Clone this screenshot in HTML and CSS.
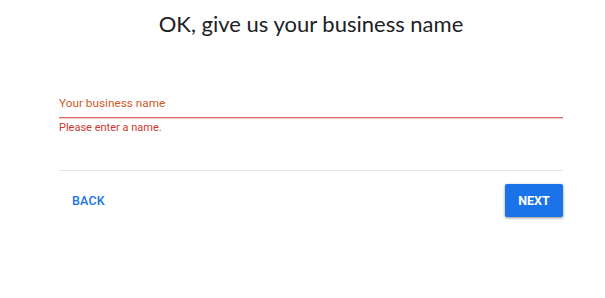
FILE: index.html
```html
<!DOCTYPE html>
<html>
<head>
<meta charset="utf-8">
<link rel="stylesheet" href="styles.css">
</head>
<body>
<div class="page">
  <h1 class="title">OK, give us your business name</h1>
  <div class="form">
    <div class="field">
      <div class="field-label">Your business name</div>
      <div class="field-line"></div>
      <div class="field-error">Please enter a name.</div>
    </div>
    <div class="divider"></div>
    <div class="actions">
      <button class="btn-back">BACK</button>
      <button class="btn-next">NEXT</button>
    </div>
  </div>
</div>
</body>
</html>
```

FILE: styles.css
```css
html, body {
  margin: 0;
  padding: 0;
  background: #ffffff;
}
.page {
  width: 605px;
  height: 298px;
  font-family: Roboto, "Liberation Sans", Arial, sans-serif;
}
.title {
  margin: 0;
  padding-top: 10px;
  text-align: center;
  font-family: Lato, Roboto, sans-serif;
  font-weight: 400;
  font-size: 22px;
  line-height: 28px;
  color: #202124;
  padding-left: 17px;
}
.form {
  margin: 0 42px 0 59px;
  padding-top: 58px;
}
.field-label {
  font-size: 11.8px;
  line-height: 14px;
  color: #cf5a2c;
  padding-bottom: 7px;
}
.field-line {
  height: 1px;
  background: #d93025;
  opacity: 0.7;
  border-bottom: 1px solid #f3b3ae;
}
.field-error {
  font-size: 11px;
  line-height: 13px;
  color: #c93a30;
  padding-top: 2px;
}
.divider {
  margin-top: 36px;
  height: 1px;
  background: #e6e6e6;
}
.actions {
  display: flex;
  justify-content: space-between;
  align-items: center;
  padding-top: 13px;
}
.btn-back {
  border: none;
  background: transparent;
  font-family: Roboto, "Liberation Sans", sans-serif;
  font-weight: 500;
  font-size: 12.5px;
  color: #1a73e8;
  padding: 0 13px;
  height: 33px;
  letter-spacing: 0.2px;
}
.btn-next {
  border: none;
  background: #1a73e8;
  color: #ffffff;
  font-family: Roboto, "Liberation Sans", sans-serif;
  font-weight: 700;
  font-size: 12.5px;
  width: 58px;
  height: 33px;
  border-radius: 2px;
  box-shadow: 0 1px 2px rgba(0,0,0,0.3), 0 1px 3px 1px rgba(0,0,0,0.12);
}
```
